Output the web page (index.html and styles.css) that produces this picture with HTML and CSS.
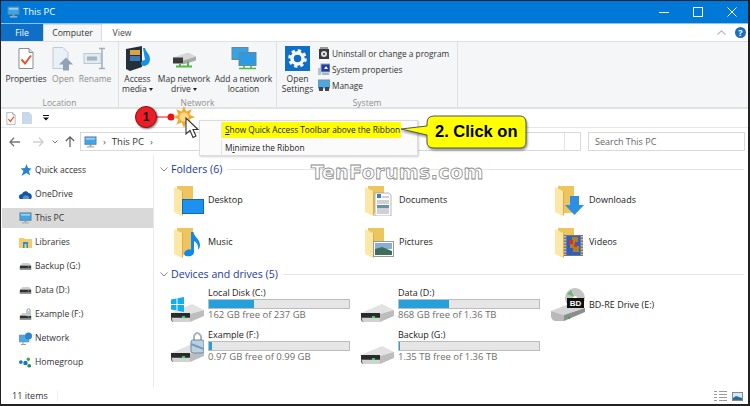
FILE: index.html
```html
<!DOCTYPE html>
<html lang="en">
<head>
<meta charset="utf-8">
<title>This PC</title>
<link rel="stylesheet" href="styles.css">
</head>
<body>
<svg class="defs" width="0" height="0">
  <defs>
    <symbol id="monitor" viewBox="0 0 14 13"><rect x="1" y="1" width="12" height="8" fill="#3ea6e8" stroke="#6d7f8c"/><rect x="2" y="2" width="10" height="2" fill="#8fd3f7"/><rect x="6" y="9" width="2" height="2" fill="#8a9aa6"/><rect x="3" y="11" width="8" height="1.5" fill="#a9b6bf"/></symbol>
    <symbol id="folder" viewBox="0 0 30 30"><path d="M3 0H19V27H3Z" fill="#eec45c"/><path d="M0 1 8 5V30L0 26Z" fill="#fbe7a6"/><path d="M8 5V30L9 29V6Z" fill="#d9ae4c"/></symbol>
    <symbol id="drive" viewBox="0 0 34 20"><path d="M1 10 22 1 34 7 20 11Z" fill="#e2e2e2"/><path d="M20 11 34 7V13L20 19Z" fill="#bdbdbd"/><path d="M1 10H20V19H4Q1 19 1 16Z" fill="#555"/><path d="M1 10H20V14H1Z" fill="#2a2a2a"/><path d="M2 15H20V19H4Q2 19 2 15Z" fill="#d2d2d2"/><rect x="12" y="13" width="3" height="2" fill="#34d058"/></symbol>
    <symbol id="sdrive" viewBox="0 0 15 10"><path d="M1 4 4 1H12L14 4Z" fill="#cfcfcf"/><rect x="1" y="4" width="13" height="5" fill="#2f2f2f"/><rect x="1" y="7" width="13" height="2" fill="#9c9c9c"/><rect x="10" y="5" width="2" height="1" fill="#42d65f"/></symbol>
    <symbol id="check" viewBox="0 0 16 22"><path d="M1 1H11L15 5V21H1Z" fill="#fff" stroke="#8d8d8d"/><path d="M11 1V5H15" fill="#ddd" stroke="#8d8d8d"/><path d="M3.5 12 7 16 13 8" fill="none" stroke="#e8552c" stroke-width="2"/></symbol>
  </defs>
</svg>

<div class="window">
  <header class="titlebar">
    <svg class="title-icon" width="13" height="12"><use href="#monitor"/></svg>
    <span class="title-text">This PC</span>
    <div class="controls">
      <svg width="10" height="10" viewBox="0 0 10 10"><path d="M0 5.5H10" stroke="#fff" stroke-width="1"/></svg>
      <svg width="10" height="10" viewBox="0 0 10 10"><rect x=".5" y=".5" width="9" height="9" fill="none" stroke="#fff"/></svg>
      <svg width="10" height="10" viewBox="0 0 10 10"><path d="M.5.5 9.5 9.5M9.5.5.5 9.5" stroke="#fff"/></svg>
    </div>
  </header>

  <nav class="tabs">
    <span class="tab tab-file">File</span>
    <span class="tab tab-active">Computer</span>
    <span class="tab tab-view">View</span>
    <svg class="collapse" width="9" height="5" viewBox="0 0 9 5"><path d="M.5 4.5 4.5.8 8.5 4.5" fill="none" stroke="#bbb" stroke-width="1.2"/></svg>
    <span class="help">?</span>
  </nav>

  <section class="ribbon">
    <div class="group group-location">
      <div class="group-items">
        <div class="rbtn rbtn-props"><svg class="rico" width="16" height="22"><use href="#check"/></svg><span>Properties</span></div>
        <div class="rbtn rbtn-open muted"><svg class="rico" width="24" height="24" viewBox="0 0 24 24"><path d="M2 1H12L17 6V22H2Z" fill="#e9f0f7" stroke="#bfcad4"/><path d="M15 11 22 18H18V24H12V18H8Z" fill="#8fa3b4"/></svg><span>Open</span></div>
        <div class="rbtn rbtn-rename muted"><svg class="rico" width="24" height="24" viewBox="0 0 24 24"><rect x="1" y="7" width="17" height="10" fill="#e3ebf1" stroke="#bcc8d1"/><rect x="4" y="10" width="10" height="4" fill="#a4b5c3"/><path d="M16 2H22M16 22H22M19 2V22" fill="none" stroke="#9fb0be" stroke-width="1.5"/></svg><span>Rename</span></div>
      </div>
      <div class="group-label">Location</div>
    </div>
    <div class="group group-network">
      <div class="group-items">
        <div class="rbtn rbtn-media"><svg class="rico" width="26" height="25" viewBox="0 0 26 25"><path d="M1 3 17 0V21L5 25 1 23Z" fill="#25303a"/><rect x="5" y="4" width="10" height="5" fill="#d9a441"/><rect x="5" y="10" width="10" height="5" fill="#3a78c2"/><path d="M18 2 20 2C21 6 25 8 25 13 25 18 21 20 19 20 16 20 15 17 17 15 18 14 19 14 20 14Z" fill="#1793e6"/></svg><span>Access<br>media <i class="caret"></i></span></div>
        <div class="rbtn rbtn-map"><svg class="rico" width="24" height="24" viewBox="0 0 24 24"><path d="M1 11 16 6 24 10 10 14Z" fill="#d6d6d6"/><path d="M1 11H11V17H1Z" fill="#3b3b3b"/><path d="M11 14 24 10V14L11 18Z" fill="#aaa"/><path d="M4 20H20M8 17V20M16 15V20" stroke="#53b848" stroke-width="2" fill="none"/></svg><span>Map network<br>drive <i class="caret"></i></span></div>
        <div class="rbtn rbtn-add"><svg class="rico" width="26" height="24" viewBox="0 0 26 24"><rect x="1" y="1" width="16" height="12" fill="#34a3e8" stroke="#6f8590"/><rect x="8" y="6" width="17" height="13" fill="#2d9be3" stroke="#6f8590"/><path d="M13 19V22M20 19V22M8 22H25" stroke="#53b848" stroke-width="1.6"/></svg><span>Add a network<br>location</span></div>
      </div>
      <div class="group-label">Network</div>
    </div>
    <div class="group group-system">
      <div class="group-items">
        <div class="rbtn rbtn-settings">
          <svg class="rico" width="25" height="25" viewBox="0 0 25 25"><rect width="25" height="25" fill="#0f6fc6"/><circle cx="12.5" cy="12.5" r="5.5" fill="none" stroke="#fff" stroke-width="3.4"/><circle cx="12.5" cy="12.5" r="8" fill="none" stroke="#fff" stroke-width="2.6" stroke-dasharray="3.3 2.98"/></svg>
          <span>Open<br>Settings</span>
        </div>
        <ul class="syslist">
          <li><svg width="12" height="13" viewBox="0 0 12 13"><rect x="1" y="2" width="10" height="10" fill="#3a3a3a"/><rect x="2" y="0" width="8" height="2" fill="#9a9a9a"/><circle cx="6" cy="7" r="3" fill="#ddd"/><circle cx="6" cy="7" r="1" fill="#333"/></svg>Uninstall or change a program</li>
          <li><svg width="12" height="13" viewBox="0 0 12 13"><rect x="3" y="1" width="9" height="8" fill="#1c3bb0" stroke="#9aa"/><path d="M6 6 8 3 10 6Z" fill="#fff"/><rect x="0" y="5" width="3" height="7" fill="#b8c2cc"/><rect x="4" y="10" width="7" height="2" fill="#aab4bd"/></svg>System properties</li>
          <li><svg width="12" height="13" viewBox="0 0 12 13"><rect x="0" y="1" width="12" height="8" fill="#49a9e8" stroke="#7a8e9a"/><rect x="1" y="8" width="4" height="4" fill="#444"/><rect x="7" y="8" width="4" height="4" fill="#444"/></svg>Manage</li>
        </ul>
      </div>
      <div class="group-label">System</div>
    </div>
  </section>

  <div class="qat">
    <svg width="10" height="13"><use href="#check"/></svg>
    <svg width="10" height="12" viewBox="0 0 10 12"><path d="M0 0H7L10 3V12H0Z" fill="#c9d8ea"/></svg>
    <svg class="qat-drop" width="6" height="6" viewBox="0 0 6 6"><path d="M0 0H6V1H0ZM0 2.5H6L3 5.5Z" fill="#111"/></svg>
  </div>

  <div class="addressrow">
    <svg width="11" height="10" viewBox="0 0 11 10"><path d="M5 .8 1 5 5 9.2M1 5H11" fill="none" stroke="#777" stroke-width="1.3"/></svg>
    <svg class="nav-fwd" width="11" height="10" viewBox="0 0 11 10"><path d="M6 .8 10 5 6 9.2M10 5H0" fill="none" stroke="#cfcfcf" stroke-width="1.3"/></svg>
    <svg class="nav-down" width="6" height="4" viewBox="0 0 6 4"><path d="M.5.5 3 3 5.5.5" fill="none" stroke="#777"/></svg>
    <svg class="nav-up" width="10" height="11" viewBox="0 0 10 11"><path d="M.8 5 5 1 9.2 5M5 1V11" fill="none" stroke="#666" stroke-width="1.3"/></svg>
    <div class="address">
      <svg width="13" height="12"><use href="#monitor"/></svg>
      <span class="crumb-sep">›</span><span>This PC</span><span class="crumb-sep crumb-end">›</span>
      <span class="refresh"></span>
    </div>
    <div class="search">Search This PC</div>
  </div>

  <div class="main">
    <aside class="sidebar">
      <div class="nav-item"><svg width="12" height="12" viewBox="0 0 12 12"><path d="M7 0 8.5 4 12 4.500 9.500 7 10.500 11.500 7 9 2 12 4 7 1 4.500 5.500 4Z" fill="#2a83cf"/></svg>Quick access</div>
      <div class="nav-item"><svg width="13" height="9" viewBox="0 0 13 9"><path d="M1 9C-1 7 0 4 3 4 4 1 8 0 9.500 3 12 3 14 6 12 9Z" fill="#0f57a8"/><path d="M4 9C3 7 5 5.500 7 5.500 9 5.500 11 7 10 9Z" fill="#fff" opacity=".35"/></svg>OneDrive</div>
      <div class="nav-item nav-selected"><svg width="13" height="12"><use href="#monitor"/></svg>This PC</div>
      <div class="nav-item"><svg width="13" height="11" viewBox="0 0 13 11"><path d="M0 1H5L6 2H13V11H0Z" fill="#f2cd6c"/><path d="M4 5H9V11H7.500V7H5.500V11H4Z" fill="#2b8fd8"/></svg>Libraries</div>
      <div class="nav-item"><svg width="13" height="9"><use href="#sdrive"/></svg>Backup (G:)</div>
      <div class="nav-item"><svg width="13" height="9"><use href="#sdrive"/></svg>Data (D:)</div>
      <div class="nav-item"><svg width="13" height="13" viewBox="0 0 13 13"><use href="#sdrive" y="4" width="13" height="9"/><rect x="7" y="3" width="5" height="5" fill="#c0c8ce"/><path d="M8 3V1.500Q9.500 0 11 1.500V3" fill="none" stroke="#8d979e"/></svg>Example (F:)</div>
      <div class="nav-item"><svg width="13" height="13" viewBox="0 0 13 13"><rect x="0" y="3" width="10" height="7" fill="#4fa7df" stroke="#7c93a3" stroke-width=".6"/><circle cx="9.500" cy="4" r="3.500" fill="#2c86cf"/><path d="M4 10V12M2 12.500H7" stroke="#8fa0ad"/></svg>Network</div>
      <div class="nav-item"><svg width="14" height="11" viewBox="0 0 14 11"><circle cx="2" cy="5" r="2" fill="#1d74c7"/><circle cx="7" cy="6" r="2.400" fill="#1d74c7"/><circle cx="10" cy="2" r="1.800" fill="#39a845"/><circle cx="11" cy="9" r="2" fill="#1c8f56"/></svg>Homegroup</div>
    </aside>

    <div class="content">
      <div class="section-head">
        <svg width="8" height="5" viewBox="0 0 8 5"><path d="M.5.5 4 4 7.500.5" fill="none" stroke="#888"/></svg>
        <span class="section-title">Folders (6)</span><span class="section-rule"></span>
      </div>
      <div class="folders">
        <div class="folder"><svg class="ficon" width="30" height="30" viewBox="0 0 30 30"><use href="#folder" width="30" height="30"/><rect x="8.500" y="13.500" width="21" height="14" fill="#1e90f0" stroke="#0c68b8"/></svg>Desktop</div>
        <div class="folder"><svg class="ficon" width="30" height="30" viewBox="0 0 30 30"><use href="#folder" width="30" height="30"/><path d="M10 7H24L26 9V30H10Z" fill="#fff" stroke="#999" stroke-width=".7"/><path d="M12 8H16V12H12Z" fill="#2c84cf"/><path d="M17 11H24M12 15H24M12 17H24M12 23H24M12 25H24M12 27H24" stroke="#889" stroke-width=".8"/><path d="M12 19H24V22H12Z" fill="#6d8ea8"/></svg>Documents</div>
        <div class="folder"><svg class="ficon" width="30" height="30" viewBox="0 0 30 30"><use href="#folder" width="30" height="30"/><path d="M15 10H24V19H29L19.500 29 10 19H15Z" fill="#2b8fe6"/></svg>Downloads</div>
        <div class="folder"><svg class="ficon" width="30" height="30" viewBox="0 0 30 30"><use href="#folder" width="30" height="30"/><path d="M17 4 19.500 4C20 9 26 11 26 17 26 19 25 21 24 22 25 17 22 14 20 13V24C20 28 15 29 12 28 9 27 10 23 13 22 15 21 16 21 17 22Z" fill="#0f8ae8"/></svg>Music</div>
        <div class="folder"><svg class="ficon" width="30" height="30" viewBox="0 0 30 30"><use href="#folder" width="30" height="30"/><rect x="8.500" y="13.500" width="20" height="15" fill="#fff" stroke="#999"/><rect x="10" y="15" width="17" height="6" fill="#87aed6"/><path d="M10 21 17 19 27 23V27H10Z" fill="#3f6d57"/></svg>Pictures</div>
        <div class="folder"><svg class="ficon" width="30" height="30" viewBox="0 0 30 30"><use href="#folder" width="30" height="30"/><rect x="9" y="7" width="19" height="21" fill="#777"/><rect x="12" y="8" width="13" height="19" fill="#2a5fc8"/><path d="M17 9H23V14H20V18H24V24H18V20H15V14H17Z" fill="#b37f16"/><path d="M14 12H18V16H14ZM19 16H22V19H19Z" fill="#c33"/><path d="M10 8V27M27 8V27" stroke="#ddd" stroke-width="1.400" stroke-dasharray="1.500 1.500"/></svg>Videos</div>
      </div>

      <div class="section-head section-devices">
        <svg width="8" height="5" viewBox="0 0 8 5"><path d="M.5.5 4 4 7.500.5" fill="none" stroke="#888"/></svg>
        <span class="section-title">Devices and drives (5)</span><span class="section-rule"></span>
      </div>
      <div class="drives">
        <div class="drive">
          <svg class="dicon" width="34" height="26" viewBox="0 0 34 26"><use href="#drive" y="6" width="34" height="20"/><path d="M1 2.500 6.500 1.500V7H1ZM7.500 1.300 14 0V7H7.500ZM1 8H6.500V13.500L1 12.500ZM7.500 8H14V15L7.500 13.700Z" fill="#10aeef"/></svg>
          <div class="dinfo"><div>Local Disk (C:)</div><div class="bar"><i class="fill fill-c"></i></div><div class="free">162 GB free of 237 GB</div></div>
        </div>
        <div class="drive">
          <svg class="dicon" width="34" height="26" viewBox="0 0 34 26"><use href="#drive" y="6" width="34" height="20"/></svg>
          <div class="dinfo"><div>Data (D:)</div><div class="bar"><i class="fill fill-d"></i></div><div class="free">868 GB free of 1.36 TB</div></div>
        </div>
        <div class="drive drive-bd">
          <svg class="bdicon" width="36" height="33" viewBox="0 0 36 33"><path d="M1 23 24 14 35 20 14 27Z" fill="#d5d5d5"/><path d="M14 27 35 20V24L14 33Z" fill="#8d8d8d"/><path d="M1 23 14 27V33H5Q1 32 1 28Z" fill="#b9b9b9"/><circle cx="25" cy="10" r="10" fill="#c4c4c4"/><path d="M17 6 24 9 21 2Z" fill="#6fb56f"/><circle cx="25" cy="10" r="2" fill="#fff"/><rect x="17" y="10" width="17" height="10" fill="#111"/><text class="bdtext" x="25.500" y="18">BD</text><rect x="18" y="28" width="2" height="3" fill="#35b24b"/></svg>
          <span>BD-RE Drive (E:)</span>
        </div>
        <div class="drive">
          <svg class="dicon dicon-lock" width="34" height="32" viewBox="0 0 34 32"><use href="#drive" y="12" width="34" height="20"/><path d="M24 10V5Q27 -1 31 5V10" fill="none" stroke="#a9b5bd" stroke-width="2"/><rect x="21" y="9" width="13" height="13" rx="2" fill="#bcd0de" stroke="#6d8ba3"/><path d="M21 13 34 18" stroke="#6d9cc4" stroke-width="2"/></svg>
          <div class="dinfo"><div>Example (F:)</div><div class="bar"><i class="fill fill-f"></i></div><div class="free">0.97 GB free of 0.99 GB</div></div>
        </div>
        <div class="drive">
          <svg class="dicon" width="34" height="26" viewBox="0 0 34 26"><use href="#drive" y="6" width="34" height="20"/></svg>
          <div class="dinfo"><div>Backup (G:)</div><div class="bar"><i class="fill fill-g"></i></div><div class="free">1.35 TB free of 1.36 TB</div></div>
        </div>
      </div>
    </div>
  </div>

  <footer class="statusbar">
    <span class="status-count">11 items</span>
    <div class="viewbtns">
      <svg width="13" height="10" viewBox="0 0 13 10"><path d="M0 .5H3M5 .5H13M0 3.500H3M5 3.500H13M0 6.500H3M5 6.500H13M0 9.500H3M5 9.500H13" stroke="#9a9a9a"/></svg>
      <svg width="11" height="9" viewBox="0 0 11 9"><rect x=".5" y=".5" width="10" height="8" fill="#d5e7f5" stroke="#7e8c96"/><path d="M1 6 4 4 10 6V8H1Z" fill="#2b6d93"/></svg>
    </div>
  </footer>
</div>

<div class="watermark">TenForums.com</div>

<div class="menu">
  <div class="menu-item menu-hl"><u>S</u>how Quick Access Toolbar above the Ribbon</div>
  <div class="menu-item">M<u>i</u>nimize the Ribbon</div>
</div>

<svg class="marker" width="60" height="30" viewBox="0 0 60 30">
  <path d="M12 14H36" stroke="#e11" stroke-width="1"/>
  <circle cx="36" cy="14" r="3.500" fill="#e11"/>
  <polygon points="60,14 54.500,16.300 56.800,21.800 51.300,19.500 49,25 46.700,19.500 41.200,21.800 43.500,16.300 38,14 43.500,11.700 41.200,6.200 46.700,8.500 49,3 51.300,8.500 56.800,6.200 54.500,11.700" fill="#f2ab2e"/>
  <circle cx="49" cy="14" r="4.500" fill="#fbd98a"/>
</svg>
<div class="badge">1</div>
<svg class="cursor" width="15" height="22" viewBox="0 0 15 22"><path d="M1 1V17L5 13.500 8 20.500 11 19 8 12.500H13Z" fill="#fff" stroke="#333" stroke-width="1.100"/></svg>

<div class="callout">
  <svg class="callout-shape" width="128" height="36" viewBox="0 0 128 36"><path d="M1 15 27 12V9Q27 2 34 2H120Q126 2 126 9V28Q126 34 120 34H34Q27 34 27 28V21Z" fill="#ff0" stroke="#555"/></svg>
  <span class="callout-text">2. Click on</span>
</div>
</body>
</html>
```
FILE: styles.css
```css
* { box-sizing: border-box; }
html, body { margin: 0; padding: 0; }
body {
  width: 750px;
  height: 406px;
  overflow: hidden;
  position: relative;
  background: #fff;
  font-family: "Open Sans", "Noto Sans", sans-serif;
  font-size: 9px;
  line-height: 10px;
  color: #333;
}
.defs { position: absolute; }
svg { display: block; flex: none; }

.window {
  width: 750px;
  height: 406px;
  display: flex;
  flex-direction: column;
  border-top: 1px solid #1c2733;
  border-left: 1px solid #222;
  border-right: 2px solid #222;
  border-bottom: 2px solid #222;
}

.titlebar {
  height: 22px;
  flex: none;
  background: #0078d7;
  display: flex;
  align-items: center;
  padding-left: 6px;
  color: #fff;
}
.title-text { margin-left: 3px; font-size: 9.5px; }
.controls { margin-left: auto; display: flex; gap: 24px; padding-right: 11px; }

.tabs {
  height: 18px;
  flex: none;
  display: flex;
  align-items: stretch;
  background: #fff;
  border-top: 1px solid #8cc3ec;
  padding-right: 2px;
}
.tab { display: flex; align-items: center; justify-content: center; font-size: 8.6px; }
.tab-file { width: 42px; background: #0f6fc6; color: #fff; }
.tab-active { width: 59px; background: #f5f6f7; border: 1px solid #dadbdc; border-bottom: 0; }
.tab-view { width: 60px; padding-right: 20px; color: #444; }
.collapse { margin: auto 9px auto auto; }
.help {
  width: 11px; height: 11px; margin: auto 0; border-radius: 50%;
  background: #1a6fc0; color: #fff; font-size: 9px; font-weight: 700;
  display: flex; align-items: center; justify-content: center;
}

.ribbon {
  height: 68px;
  flex: none;
  display: flex;
  background: #f5f6f7;
  border-top: 1px solid #dfe0e1;
  border-bottom: 2px solid #e1e2e3;
  font-size: 8.5px;
}
.group {
  display: flex;
  flex-direction: column;
  border-right: 1px solid #dfe0e2;
}
.group-location { width: 118px; }
.group-network { width: 158px; }
.group-system { width: 181px; }
.group-items { display: flex; flex: 1; }
.group-label {
  height: 9px;
  text-align: center;
  color: #8f8f8f;
  font-size: 8.5px;
  line-height: 9px;
}
.rbtn {
  display: flex;
  flex-direction: column;
  align-items: center;
  text-align: center;
  white-space: nowrap;
}
.rbtn .rico { height: 25px; margin-top: 4px; margin-bottom: 3px; }
.muted { color: #8c8c8c; }
.rbtn-props { width: 46px; margin-left: 2px; }
.rbtn-open { width: 28px; }
.rbtn-rename { width: 36px; }
.rbtn-media { width: 37px; }
.rbtn-map { width: 56px; }
.rbtn-add { width: 63px; }
.rbtn-settings { width: 41px; }
.caret {
  display: inline-block;
  width: 0; height: 0;
  border: 2.5px solid transparent;
  border-top: 3px solid #222;
  border-bottom: 0;
  vertical-align: middle;
}
.syslist { list-style: none; margin: 5px 0 0 0; padding: 0; display: flex; flex-direction: column; gap: 3px; font-size: 8.3px; }
.syslist li { height: 13px; display: flex; align-items: center; gap: 2px; white-space: nowrap; }

.qat {
  height: 19px;
  flex: none;
  display: flex;
  align-items: center;
  padding-left: 5px;
  gap: 6px;
  border-bottom: 1px solid #e6e6e6;
}
.qat-drop { margin-left: 5px; }

.addressrow {
  height: 27px;
  flex: none;
  display: flex;
  align-items: center;
  padding: 0 3px 0 8px;
}
.nav-fwd { margin-left: 13px; }
.nav-down { margin-left: 8px; }
.nav-up { margin-left: 7px; }
.address {
  width: 501px;
  height: 19px;
  margin-left: 5px;
  border: 1px solid #d9d9d9;
  display: flex;
  align-items: center;
  padding-left: 3px;
  font-size: 9.5px;
}
.crumb-sep { margin: 0 6px; color: #555; }
.crumb-end { margin-right: 0; }
.refresh { margin-left: auto; width: 16px; height: 100%; border-left: 1px solid #e4e4e4; }
.search {
  margin-left: 7px;
  flex: 1;
  height: 19px;
  border: 1px solid #d9d9d9;
  display: flex;
  align-items: center;
  padding-left: 6px;
  color: #666;
}

.main { flex: 1; display: flex; min-height: 0; }
.sidebar {
  width: 153px;
  flex: none;
  border-right: 1px solid #eaeaea;
  padding-top: 3px;
  padding-left: 1px;
  font-size: 8.6px;
}
.nav-item {
  height: 24px;
  display: flex;
  align-items: center;
  padding-left: 17px;
  gap: 3px;
}
.nav-item svg { width: 13px; }
.nav-selected { background: #d9d9d9; height: 20px; margin: 2px 0; }

.content { flex: 1; padding: 7px 4px 0 6px; min-width: 0; }
.section-head { display: flex; align-items: center; height: 14px; gap: 3px; }
.section-title { font-size: 10.6px; color: #1b3a9a; white-space: nowrap; }
.section-rule { flex: 1; height: 1px; background: #e6e6e6; margin-left: 2px; }
.section-devices { margin-top: 9px; }

.folders {
  display: grid;
  grid-template-columns: 191px 190px 1fr;
  grid-auto-rows: 30px;
  row-gap: 12px;
  margin: 10px 0 0 14px;
}
.folder { display: flex; align-items: flex-start; gap: 4px; line-height: 28px; color: #222; }

.drives {
  display: grid;
  grid-template-columns: 190px 190px 1fr;
  grid-template-rows: 42px 42px;
  margin: 7px 0 0 10px;
}
.drive { display: flex; align-items: flex-start; gap: 4px; color: #222; }
.dicon { margin-top: 9px; }
.dicon-lock { margin-top: 1px; }
.dinfo { width: 142px; }
.bar { height: 10px; margin: 1px 0 1px; background: #e6e6e6; border: 1px solid #bcbcbc; }
.fill { display: block; height: 100%; background: #26a0da; }
.fill-c { width: 32%; }
.fill-d { width: 36%; }
.fill-f { width: 2%; }
.fill-g { width: 1%; }
.free { color: #6d6d6d; font-size: 9.5px; white-space: nowrap; }
.drive-bd { align-items: center; height: 33px; gap: 3px; }
.bdtext { font-family: "Liberation Sans", sans-serif; font-size: 8px; font-weight: 700; fill: #fff; text-anchor: middle; }

.statusbar {
  height: 16px;
  flex: none;
  display: flex;
  align-items: center;
  padding: 0 5px 0 11px;
}
.status-count { padding-right: 9px; border-right: 1px solid #eee; }
.viewbtns { margin-left: auto; display: flex; gap: 5px; align-items: center; }

.watermark {
  position: absolute;
  left: 311px;
  top: 161px;
  font-family: "DejaVu Sans", sans-serif;
  font-size: 19px;
  line-height: 22px;
  font-weight: 700;
  color: #fff;
  -webkit-text-stroke: 0.8px #8a8a8a;
  letter-spacing: 0.4px;
}

.menu {
  position: absolute;
  left: 199px;
  top: 120px;
  width: 219px;
  height: 36px;
  background: #fbfbfb;
  border: 1px solid #dcdcdc;
  padding-left: 21px;
  box-shadow: 1px 1px 2px rgba(0, 0, 0, .18);
  font-size: 8.3px;
  color: #222;
}
.menu-item { height: 16px; line-height: 16px; padding-left: 3px; white-space: nowrap; border-left: 1px solid #e4e4e4; }
.menu-item + .menu-item { margin-top: 2px; }
.menu-hl { background: #ff0; width: 180px; margin-top: 1px; }

.marker { position: absolute; left: 135px; top: 103px; }
.badge {
  position: absolute;
  left: 135px;
  top: 106px;
  width: 22px;
  height: 22px;
  border-radius: 50%;
  background: #ee1c25;
  border: 1px solid #8a1015;
  box-shadow: 1px 1px 2px rgba(0, 0, 0, .5);
  color: #111;
  font-family: "Liberation Sans", sans-serif;
  font-size: 12px;
  font-weight: 700;
  display: flex;
  align-items: center;
  justify-content: center;
}
.cursor { position: absolute; left: 185px; top: 117px; }
.callout { position: absolute; left: 400px; top: 114px; width: 128px; height: 36px; }
.callout-shape { filter: drop-shadow(1px 2px 1px rgba(0, 0, 0, .4)); }
.callout-text {
  position: absolute;
  left: 35px;
  top: 8px;
  font-family: "Liberation Sans", sans-serif;
  font-size: 16.5px;
  line-height: 18px;
  font-weight: 700;
  color: #000;
  white-space: nowrap;
}
```
